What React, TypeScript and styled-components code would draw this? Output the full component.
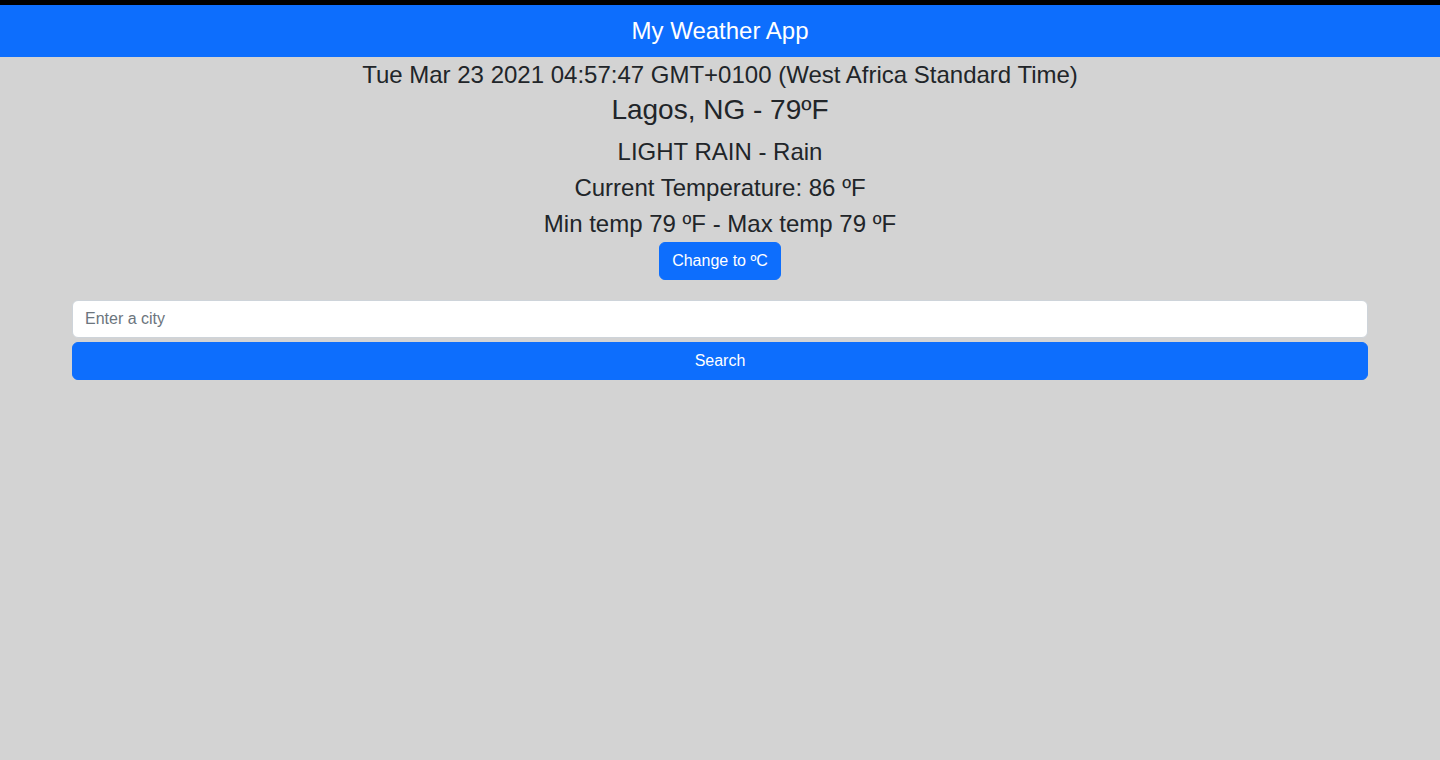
import React, { useState } from "react";
import styled, { createGlobalStyle } from "styled-components";

const GlobalStyle = createGlobalStyle`
  * { box-sizing: border-box; }
  html, body { margin: 0; padding: 0; }
  body {
    background: #d3d3d3;
    font-family: "Liberation Sans", Arial, sans-serif;
    color: #212529;
    font-size: 16px;
    line-height: 1.5;
  }
`;

const Page = styled.div`
  min-height: 100vh;
  background: #d3d3d3;
`;

const Header = styled.header`
  border-top: 5px solid #000;
  background: #0d6efd;
  height: 57px;
  display: flex;
  align-items: center;
  justify-content: center;
`;

const Title = styled.h1`
  margin: 0;
  color: #fff;
  font-size: 24px;
  font-weight: 400;
  line-height: 1.2;
`;

const Main = styled.main`
  display: flex;
  flex-direction: column;
  align-items: center;
  text-align: center;
`;

const Line = styled.p<{ $size?: number; $lh?: number; $mb?: number }>`
  margin: 0 0 ${(p) => p.$mb ?? 0}px;
  font-size: ${(p) => p.$size ?? 24}px;
  line-height: ${(p) => p.$lh ?? 1.5};
  font-weight: 400;
`;

const Button = styled.button<{ $block?: boolean }>`
  display: block;
  width: ${(p) => (p.$block ? "100%" : "auto")};
  background: #0d6efd;
  color: #fff;
  border: 1px solid #0d6efd;
  border-radius: 6px;
  padding: 6px 12px;
  font-family: "Liberation Sans", Arial, sans-serif;
  font-size: 16px;
  line-height: 1.5;
  cursor: pointer;
`;

const Form = styled.form`
  width: 1296px;
  margin: 20px auto 0;
  display: flex;
  flex-direction: column;
  gap: 4px;
`;

const Input = styled.input`
  display: block;
  width: 100%;
  height: 38px;
  padding: 6px 12px;
  border: 1px solid #ced4da;
  border-radius: 6px;
  background: #fff;
  font-family: "Liberation Sans", Arial, sans-serif;
  font-size: 16px;
  line-height: 1.5;
  color: #212529;
  outline: none;
  &::placeholder { color: #6c757d; }
`;

export default function App() {
  const [celsius, setCelsius] = useState(false);
  return (
    <Page>
      <GlobalStyle />
      <Header>
        <Title>My Weather App</Title>
      </Header>
      <Main>
        <Line>Tue Mar 23 2021 04:57:47 GMT+0100 (West Africa Standard Time)</Line>
        <Line as="h3" $size={28} $lh={1.2} $mb={7}>Lagos, NG - 79ºF</Line>
        <Line>LIGHT RAIN - Rain</Line>
        <Line>Current Temperature: 86 ºF</Line>
        <Line>Min temp 79 ºF - Max temp 79 ºF</Line>
        <Button type="button" onClick={() => setCelsius(!celsius)}>
          Change to ºC
        </Button>
      </Main>
      <Form onSubmit={(e) => e.preventDefault()}>
        <Input type="text" placeholder="Enter a city" />
        <Button $block type="submit">Search</Button>
      </Form>
    </Page>
  );
}
